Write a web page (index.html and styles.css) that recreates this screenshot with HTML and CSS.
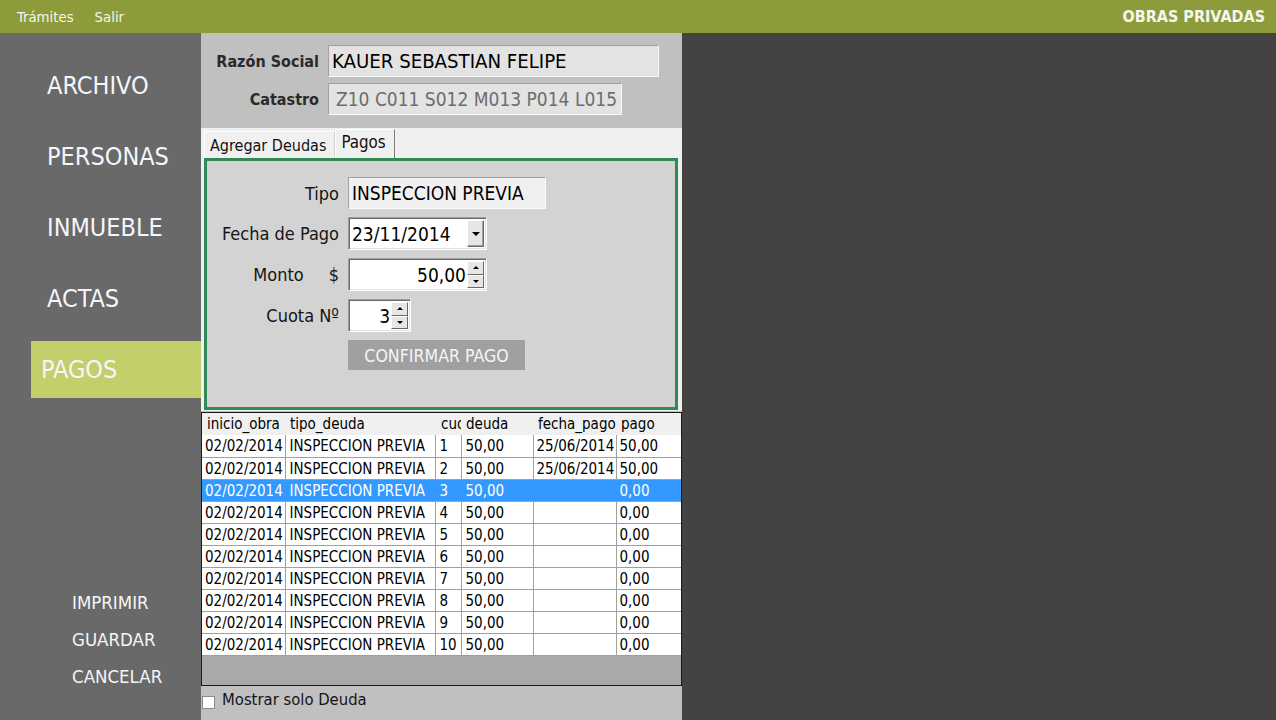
FILE: index.html
```html
<!DOCTYPE html>
<html lang="es">
<head>
<meta charset="utf-8">
<title>Obras Privadas - Pagos</title>
<link rel="stylesheet" href="styles.css">
</head>
<body>
<header class="topbar">
  <nav class="topnav">
    <span class="topnav-item">Trámites</span>
    <span class="topnav-item">Salir</span>
  </nav>
  <div class="brand">OBRAS PRIVADAS</div>
</header>
<div class="app">
  <aside class="sidebar">
    <ul class="menu">
      <li class="menu-item">ARCHIVO</li>
      <li class="menu-item">PERSONAS</li>
      <li class="menu-item">INMUEBLE</li>
      <li class="menu-item">ACTAS</li>
      <li class="menu-item active">PAGOS</li>
    </ul>
    <ul class="actions">
      <li class="action">IMPRIMIR</li>
      <li class="action">GUARDAR</li>
      <li class="action">CANCELAR</li>
    </ul>
  </aside>
  <main class="panel">
    <div class="head-form">
      <label class="head-label">Razón Social</label>
      <div class="head-input razon">KAUER SEBASTIAN FELIPE</div>
      <label class="head-label">Catastro</label>
      <div class="head-input catastro">Z10 C011 S012 M013 P014 L015</div>
    </div>
    <div class="tabs">
      <div class="tab-strip">
        <div class="tab">Agregar Deudas</div>
        <div class="tab selected">Pagos</div>
      </div>
      <div class="tab-page">
        <div class="pay-form">
          <div class="f-label">Tipo</div>
          <div class="field readonly tipo">INSPECCION PREVIA</div>

          <div class="f-label">Fecha de Pago</div>
          <div class="field sunken fecha">
            <span class="field-text">23/11/2014</span>
            <span class="drop-btn"><span class="tri-down"></span></span>
          </div>

          <div class="f-label monto-label"><span>Monto</span><span class="currency">$</span></div>
          <div class="field sunken monto">
            <span class="field-text right">50,00</span>
            <span class="spin">
              <span class="spin-btn"><span class="tri-up"></span></span>
              <span class="spin-btn"><span class="tri-down small"></span></span>
            </span>
          </div>

          <div class="f-label">Cuota Nº</div>
          <div class="field sunken cuota">
            <span class="field-text right">3</span>
            <span class="spin">
              <span class="spin-btn"><span class="tri-up"></span></span>
              <span class="spin-btn"><span class="tri-down small"></span></span>
            </span>
          </div>

          <div class="f-label"></div>
          <div class="confirm">CONFIRMAR PAGO</div>
        </div>
      </div>
    </div>
    <div class="grid-wrap">
      <table class="grid">
        <colgroup>
          <col class="c1"><col class="c2"><col class="c3"><col class="c4"><col class="c5"><col class="c6">
        </colgroup>
        <thead>
          <tr><th>inicio_obra</th><th>tipo_deuda</th><th>cuota</th><th>deuda</th><th>fecha_pago</th><th>pago</th></tr>
        </thead>
        <tbody>
          <tr><td>02/02/2014</td><td>INSPECCION PREVIA</td><td>1</td><td>50,00</td><td>25/06/2014</td><td>50,00</td></tr>
          <tr><td>02/02/2014</td><td>INSPECCION PREVIA</td><td>2</td><td>50,00</td><td>25/06/2014</td><td>50,00</td></tr>
          <tr class="sel"><td>02/02/2014</td><td>INSPECCION PREVIA</td><td>3</td><td>50,00</td><td></td><td>0,00</td></tr>
          <tr><td>02/02/2014</td><td>INSPECCION PREVIA</td><td>4</td><td>50,00</td><td></td><td>0,00</td></tr>
          <tr><td>02/02/2014</td><td>INSPECCION PREVIA</td><td>5</td><td>50,00</td><td></td><td>0,00</td></tr>
          <tr><td>02/02/2014</td><td>INSPECCION PREVIA</td><td>6</td><td>50,00</td><td></td><td>0,00</td></tr>
          <tr><td>02/02/2014</td><td>INSPECCION PREVIA</td><td>7</td><td>50,00</td><td></td><td>0,00</td></tr>
          <tr><td>02/02/2014</td><td>INSPECCION PREVIA</td><td>8</td><td>50,00</td><td></td><td>0,00</td></tr>
          <tr><td>02/02/2014</td><td>INSPECCION PREVIA</td><td>9</td><td>50,00</td><td></td><td>0,00</td></tr>
          <tr><td>02/02/2014</td><td>INSPECCION PREVIA</td><td>10</td><td>50,00</td><td></td><td>0,00</td></tr>
        </tbody>
      </table>
    </div>
    <div class="check-row">
      <span class="checkbox"></span>
      <span class="check-label">Mostrar solo Deuda</span>
    </div>
  </main>
  <section class="desk"></section>
</div>
</body>
</html>
```

FILE: styles.css
```css
* { box-sizing: border-box; }
html, body { margin: 0; padding: 0; }
body {
  width: 1276px;
  height: 720px;
  overflow: hidden;
  font-family: "DejaVu Sans Condensed", "DejaVu Sans", sans-serif;
  display: flex;
  flex-direction: column;
  background: #434343;
}

/* top bar */
.topbar {
  height: 33px;
  flex: 0 0 33px;
  background: #8e9b3a;
  display: flex;
  align-items: center;
  justify-content: space-between;
  padding: 0 11px 0 17px;
  color: #f4f7ee;
}
.topnav { display: flex; gap: 21px; }
.topnav-item { font-size: 14.8px; }
.brand { font-size: 16px; font-weight: bold; }

.app {
  flex: 1;
  display: flex;
  min-height: 0;
}

/* sidebar */
.sidebar {
  width: 201px;
  flex: 0 0 201px;
  background: #696969;
  display: flex;
  flex-direction: column;
}
.menu, .actions { list-style: none; margin: 0; padding: 0; }
.menu {
  padding-top: 24px;
  display: flex;
  flex-direction: column;
  gap: 14px;
}
.menu-item {
  margin-left: 31px;
  height: 57px;
  line-height: 57px;
  padding-left: 16px;
  font-size: 25px;
  color: #f4f6fb;
}
.menu-item.active {
  background: #c2cf6b;
  padding-left: 10px;
}
.actions {
  margin-top: auto;
  padding: 0 0 25px 72px;
}
.action {
  height: 37px;
  line-height: 37px;
  font-size: 18.5px;
  color: #f4f6fb;
}

/* main panel */
.panel {
  width: 481px;
  flex: 0 0 481px;
  background: #c0c0c0;
  display: flex;
  flex-direction: column;
}
.head-form {
  display: grid;
  grid-template-columns: 118px auto;
  grid-template-rows: 32px 32px;
  column-gap: 9px;
  row-gap: 6px;
  padding: 12px 0 13px;
  align-items: center;
  justify-items: start;
}
.head-label {
  justify-self: end;
  font-size: 16px;
  font-weight: bold;
  color: #2a2a2a;
}
.head-input {
  height: 32px;
  line-height: 30px;
  padding-left: 3px;
  font-size: 19px;
  background: #e3e3e3;
  border: 1px solid;
  border-color: #a0a0a0 #fafafa #fafafa #a0a0a0;
  white-space: nowrap;
}
.razon { width: 331px; color: #000; font-size: 20.2px; }
.catastro { width: 294px; color: #6d6d6d; padding-left: 7px; }

/* tabs */
.tabs {
  background: #f0f0f0;
  height: 283px;
  padding: 0 4px 1px 3px;
  display: flex;
  flex-direction: column;
}
.tab-strip {
  height: 30px;
  display: flex;
  align-items: flex-end;
}
.tab {
  height: 27px;
  padding: 0 8px 0 5px;
  font-size: 16px;
  line-height: 27px;
  color: #111;
  border-top: 1px solid #fff;
  border-left: 1px solid #fff;
  border-right: 1px solid #d0d0d0;
}
.tab.selected {
  height: 29px;
  line-height: 25px;
  font-size: 16.8px;
  border-right: 1px solid #7a7a7a;
  border-top: 1px solid #fdfdfd;
  padding: 0 8px 0 5px;
}
.tab-page {
  flex: 1;
  border: 3px solid #2e8b57;
  background: #d3d3d3;
  padding-top: 16px;
}
.pay-form {
  display: grid;
  grid-template-columns: 132px auto;
  column-gap: 9px;
  align-items: center;
  justify-items: start;
  grid-template-rows: 32px 33px 33px 33px 30px;
  row-gap: 8px;
}
.f-label {
  justify-self: end;
  font-size: 18px;
  color: #151515;
}
.monto-label { display: flex; }
.currency { margin-left: 25px; }

.field {
  height: 100%;
  font-size: 19px;
  color: #000;
  display: flex;
  align-items: center;
  white-space: nowrap;
}
.readonly {
  background: #f0f0f0;
  border: 1px solid;
  border-color: #a0a0a0 #fafafa #fafafa #a0a0a0;
  padding-left: 3px;
  width: 198px;
}
.sunken {
  background: #fff;
  border: 1px solid;
  border-color: #a0a0a0 #fff #fff #a0a0a0;
  box-shadow: inset 1px 1px 0 #696969, inset -1px -1px 0 #e3e3e3;
  padding: 2px 2px 2px 3px;
}
.fecha { width: 139px; }
.monto { width: 139px; }
.cuota { width: 63px; }
.field-text { flex: 1; }
.field-text.right { text-align: right; padding-right: 1px; }

.drop-btn {
  width: 17px;
  height: 100%;
  background: #e6e6e6;
  border: 1px solid;
  border-color: #fff #696969 #696969 #fff;
  box-shadow: inset -1px -1px 0 #a0a0a0;
  display: flex;
  align-items: center;
  justify-content: center;
}
.spin {
  width: 17px;
  height: 100%;
  display: flex;
  flex-direction: column;
}
.spin-btn {
  flex: 1;
  background: #e6e6e6;
  border: 1px solid;
  border-color: #fff #696969 #696969 #fff;
  display: flex;
  align-items: center;
  justify-content: center;
}
.tri-down {
  width: 0; height: 0;
  border-left: 4px solid transparent;
  border-right: 4px solid transparent;
  border-top: 4px solid #000;
}
.tri-down.small {
  border-left-width: 3px;
  border-right-width: 3px;
  border-top-width: 3px;
}
.tri-up {
  width: 0; height: 0;
  border-left: 3px solid transparent;
  border-right: 3px solid transparent;
  border-bottom: 3px solid #000;
}
.confirm {
  width: 177px;
  height: 30px;
  background: #a0a0a0;
  color: #f6f6f6;
  font-size: 17.6px;
  padding-top: 2px;
  display: flex;
  align-items: center;
  justify-content: center;
}

/* grid */
.grid-wrap {
  margin-top: 1px;
  height: 274px;
  border: 1px solid #1a1a1a;
  background: #a9a9a9;
  overflow: hidden;
}
.grid {
  border-collapse: collapse;
  table-layout: fixed;
  width: 479px;
  font-size: 15px;
  color: #000;
}
.c1 { width: 83px; }
.c2 { width: 150px; }
.c3 { width: 26px; }
.c4 { width: 72px; }
.c5 { width: 83px; }
.c6 { width: 65px; }
.grid th {
  height: 22px;
  background: #f0f0f0;
  font-weight: normal;
  text-align: left;
  padding: 0 0 0 5px;
  white-space: nowrap;
  overflow: hidden;
  text-overflow: clip;
}
.grid th:nth-child(3) { padding-left: 6px; }
.grid td {
  height: 22px;
  padding: 1px 0 0 3px;
  background: #fff;
  border-right: 1px solid #a0a0a0;
  border-bottom: 1px solid #a0a0a0;
  white-space: nowrap;
  overflow: hidden;
}
.grid td:nth-child(2), .grid td:nth-child(3), .grid td:nth-child(4) { padding-left: 4px; }
.grid tr.sel td {
  background: #3399ff;
  color: #fff;
  border-right-color: #3399ff;
}

.check-row {
  flex: 1;
  display: flex;
  align-items: flex-start;
  padding: 3px 0 0 1px;
  gap: 7px;
}
.checkbox {
  width: 13px;
  height: 13px;
  background: #fff;
  border: 1px solid #8a8a8a;
  margin-top: 7px;
}
.check-label {
  font-size: 16.5px;
  line-height: 22px;
  color: #151515;
}

.desk {
  flex: 1;
  background: #434343;
}
```
